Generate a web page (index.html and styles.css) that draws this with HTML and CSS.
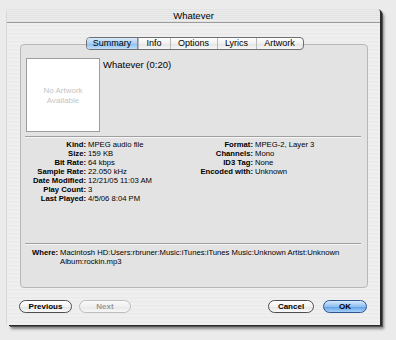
FILE: index.html
```html
<!DOCTYPE html>
<html>
<head>
<meta charset="utf-8">
<link rel="stylesheet" href="styles.css">
</head>
<body>
<div class="window">
  <div class="titlebar">Whatever</div>
  <div class="content">
    <div class="tabs">
      <span class="tab sel w-summary">Summary</span>
      <span class="tab w-info">Info</span>
      <span class="tab w-options">Options</span>
      <span class="tab w-lyrics">Lyrics</span>
      <span class="tab w-artwork">Artwork</span>
    </div>
    <div class="panel">
      <div class="top">
        <div class="art"><span>No Artwork</span><span>Available</span></div>
        <div class="song">Whatever (0:20)</div>
      </div>
      <div class="sep"></div>
      <div class="info">
        <span class="lbl">Kind:</span><span class="val">MPEG audio file</span><span class="lbl">Format:</span><span class="val">MPEG-2, Layer 3</span>
        <span class="lbl">Size:</span><span class="val">159 KB</span><span class="lbl">Channels:</span><span class="val">Mono</span>
        <span class="lbl">Bit Rate:</span><span class="val">64 kbps</span><span class="lbl">ID3 Tag:</span><span class="val">None</span>
        <span class="lbl">Sample Rate:</span><span class="val">22.050 kHz</span><span class="lbl">Encoded with:</span><span class="val">Unknown</span>
        <span class="lbl">Date Modified:</span><span class="val">12/21/05 11:03 AM</span><span></span><span></span>
        <span class="lbl">Play Count:</span><span class="val">3</span><span></span><span></span>
        <span class="lbl">Last Played:</span><span class="val">4/5/06 8:04 PM</span><span></span><span></span>
      </div>
      <div class="sep sep2"></div>
      <div class="where">
        <span class="lbl">Where:</span><span class="val">Macintosh HD:Users:rbruner:Music:iTunes:iTunes Music:Unknown Artist:Unknown Album:rockin.mp3</span>
      </div>
    </div>
  </div>
  <div class="buttons">
    <div class="group">
      <span class="btn b-prev">Previous</span>
      <span class="btn b-next disabled">Next</span>
    </div>
    <div class="group right">
      <span class="btn b-cancel">Cancel</span>
      <span class="btn b-ok default">OK</span>
    </div>
  </div>
</div>
</body>
</html>
```
FILE: styles.css
```css
html, body {
  margin: 0;
  padding: 0;
}
body {
  width: 396px;
  height: 340px;
  overflow: hidden;
  background: #ebebeb;
  font-family: "Liberation Sans", Arial, sans-serif;
  color: #000;
  padding: 8px 0 0 7px;
  box-sizing: border-box;
}
.window {
  width: 373px;
  height: 317px;
  border-radius: 5px 5px 0 0;
  background: repeating-linear-gradient(#f0f0f0 0 1px, #e9e9e9 1px 2px, #eeeeee 2px 4px);
  box-shadow: 2px 1px 0 #2a2a2a, 3px 2px 0 #555, 4px 4px 3px rgba(0,0,0,0.45), -1px 0 0 #d8d8d8;
  display: flex;
  flex-direction: column;
}
.titlebar {
  height: 14px;
  border-bottom: 1px solid #9c9c9c;
  font-size: 9.5px;
  line-height: 15px;
  text-align: center;
  border-radius: 5px 5px 0 0;
  background: repeating-linear-gradient(#ececec 0 1px, #e2e2e2 1px 2px);
}
.content {
  padding: 14px 12px 0 13px;
  display: flex;
  flex-direction: column;
}
.tabs {
  align-self: center;
  display: flex;
  height: 13px;
  box-sizing: border-box;
  border: 1px solid #6f6f6f;
  border-radius: 4px;
  margin-bottom: -6px;
  position: relative;
  z-index: 1;
  background: linear-gradient(#ffffff, #f1f1f1 50%, #e3e3e3 51%, #f6f6f6);
  overflow: hidden;
  margin-left: 1px;
}
.tab {
  font-size: 9px;
  line-height: 11px;
  text-align: center;
  border-left: 1px solid #b9b9b9;
  box-sizing: border-box;
}
.tab:first-child { border-left: none; }
.tab.sel {
  background: linear-gradient(#d9ebfb, #a9cff3 50%, #8cbdee 51%, #bfdffb);
  box-shadow: inset -1px 0 0 #6a8fbf;
}
.w-summary { width: 51px; }
.w-info { width: 32px; }
.w-options { width: 47px; }
.w-lyrics { width: 39px; }
.w-artwork { width: 47px; }
.panel {
  height: 244px;
  box-sizing: border-box;
  border: 1px solid #b7b7b7;
  border-radius: 4px;
  background: #e3e3e3;
  padding: 13px 6px 0 5px;
  display: flex;
  flex-direction: column;
}
.top {
  display: flex;
  align-items: flex-start;
}
.art {
  width: 74px;
  height: 74px;
  box-sizing: border-box;
  border: 1px solid #9d9d9d;
  background: #fff;
  display: flex;
  flex-direction: column;
  align-items: center;
  justify-content: center;
  font-size: 8px;
  line-height: 10px;
  color: #c4c4c4;
  padding-top: 1px;
}
.song {
  margin-left: 3px;
  margin-top: 1px;
  font-size: 9.5px;
  line-height: 11px;
}
.sep {
  margin: 4px 0 0 -1px;
  border-top: 1px solid #9f9f9f;
  border-bottom: 1px solid #f6f6f6;
}
.info {
  margin-top: 2px;
  display: grid;
  grid-template-columns: 60px 101px 62px auto;
  column-gap: 2px;
  font-size: 7.7px;
  line-height: 9px;
}
.lbl {
  font-weight: bold;
  text-align: right;
  white-space: nowrap;
}
.val {
  white-space: nowrap;
}
.sep2 {
  margin-top: 40px;
}
.where {
  margin-top: 4px;
  display: grid;
  grid-template-columns: 32px 292px;
  column-gap: 2px;
  font-size: 7.7px;
  line-height: 8.5px;
}
.where .val {
  white-space: normal;
}
.buttons {
  margin-top: 12px;
  padding: 0 13px 0 12px;
  display: flex;
  justify-content: space-between;
}
.group {
  display: flex;
  gap: 7px;
}
.group.right { gap: 9px; }
.btn {
  height: 13px;
  box-sizing: border-box;
  border: 1px solid #4e4e4e;
  border-radius: 7px;
  background: linear-gradient(#ffffff, #f2f2f2 50%, #e2e2e2 51%, #fbfbfb);
  font-size: 8px;
  font-weight: bold;
  line-height: 11px;
  text-align: center;
}
.b-prev { width: 53px; }
.b-next { width: 52px; }
.b-cancel { width: 46px; }
.b-ok { width: 44px; }
.btn.disabled {
  border-color: #bdbdbd;
  color: #9a9a9a;
  background: linear-gradient(#fafafa, #f0f0f0 50%, #e8e8e8 51%, #f6f6f6);
}
.btn.default {
  border-color: #2f5590;
  background: linear-gradient(#d6e9fc, #8fc0f1 50%, #5d9ce6 51%, #a6d1f8);
}
```
